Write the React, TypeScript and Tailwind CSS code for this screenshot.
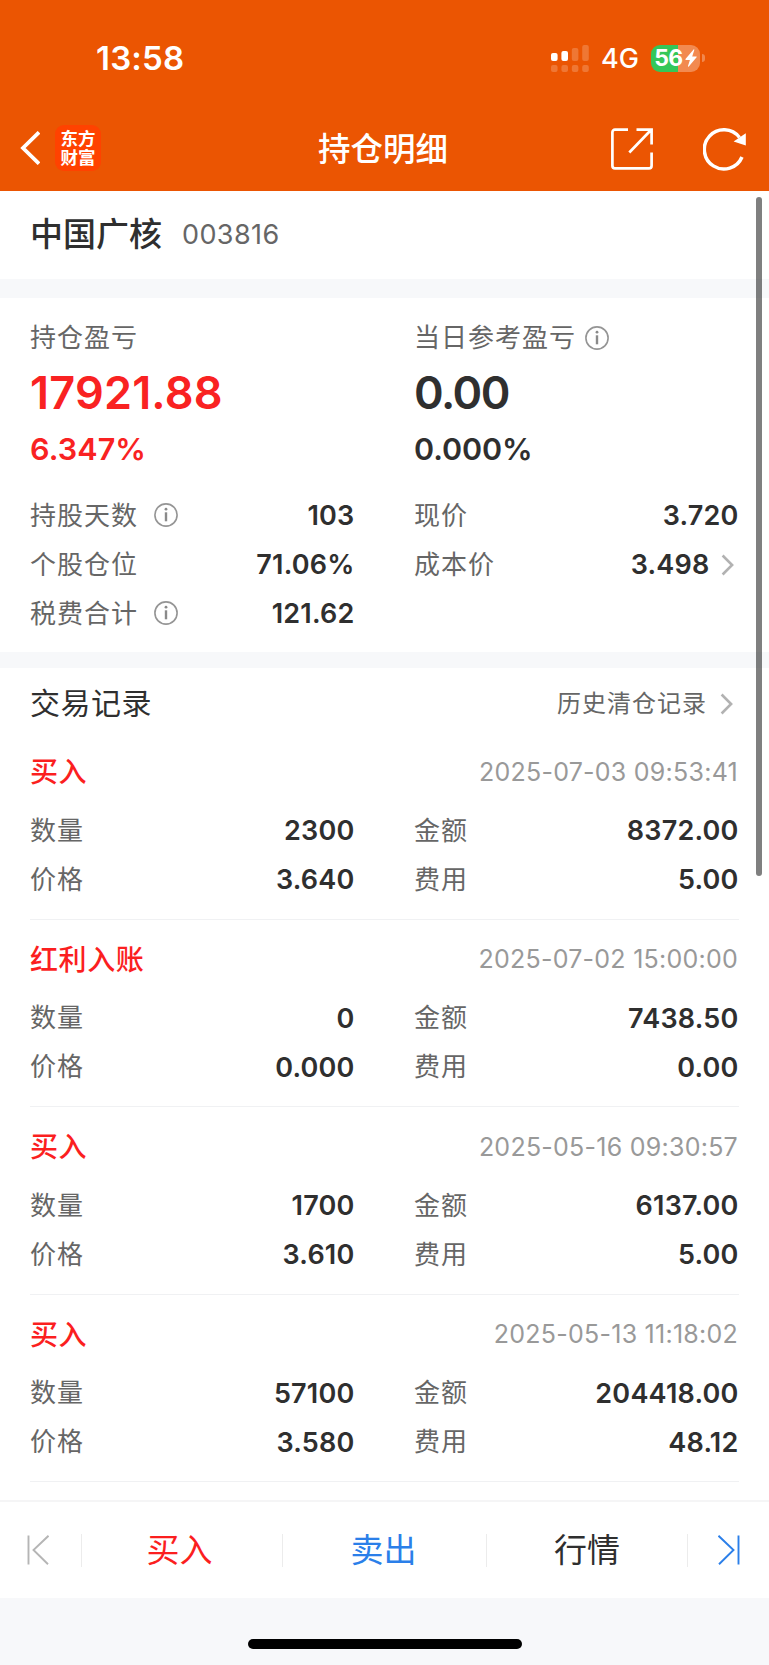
import type { ReactNode } from 'react';

interface Trade {
  type: string;
  time: string;
  count: string;
  amount: string;
  price: string;
  fee: string;
}

const trades: Trade[] = [
  { type: '买入', time: '2025-07-03 09:53:41', count: '2300', amount: '8372.00', price: '3.640', fee: '5.00' },
  { type: '红利入账', time: '2025-07-02 15:00:00', count: '0', amount: '7438.50', price: '0.000', fee: '0.00' },
  { type: '买入', time: '2025-05-16 09:30:57', count: '1700', amount: '6137.00', price: '3.610', fee: '5.00' },
  { type: '买入', time: '2025-05-13 11:18:02', count: '57100', amount: '204418.00', price: '3.580', fee: '48.12' },
];

const InfoIcon = () => (
  <svg viewBox="0 0 24 24" className="w-6 h-6 shrink-0" fill="none">
    <circle cx="12" cy="12" r="11.1" stroke="#959595" strokeWidth="1.6" />
    <circle cx="12" cy="6.2" r="1.4" fill="#8a8a8a" />
    <path d="M12 9.3v9" stroke="#8a8a8a" strokeWidth="2.4" />
  </svg>
);

const Chevron = () => (
  <svg viewBox="0 0 14 22" className="w-3.5 h-[22px] shrink-0" fill="none">
    <path d="M1.6 1.5 11.1 11 1.6 20.5" stroke="#b2b2b2" strokeWidth="2.6" />
  </svg>
);

// 一行「标签 … 数值」，arrow 时数值后带箭头
function Field({ label, value, info, arrow }: { label: string; value: string; info?: boolean; arrow?: boolean }) {
  return (
    <div className="flex h-[49px] items-center leading-none">
      <span className="text-[26px] tracking-[1px] text-[#666]">{label}</span>
      {info && (
        <span className="ml-4 pb-px">
          <InfoIcon />
        </span>
      )}
      <span className="ml-auto text-[27px] font-semibold tracking-[0.2px] text-[#2f2f2f]">{value}</span>
      {arrow && (
        <span className="ml-[11px] mr-1">
          <Chevron />
        </span>
      )}
    </div>
  );
}

function Columns({ children }: { children: ReactNode }) {
  return <div className="grid grid-cols-[324.5px_324.5px] gap-x-[59.5px]">{children}</div>;
}

function StatusBar() {
  return (
    <div className="flex h-[116px] items-center pl-[96px] pr-[64px] leading-none text-white">
      <span className="text-[33px] font-semibold tracking-[0.2px]">13:58</span>
      <svg viewBox="0 0 38 27" className="ml-auto h-[27px] w-[38px]" fill="#fff">
        <rect x="0" y="8" width="6.6" height="8" rx="2" />
        <rect x="10.4" y="6" width="6.6" height="10" rx="2" />
        <g fillOpacity="0.2">
          <rect x="20.8" y="3" width="6.6" height="13" rx="2" />
          <rect x="31.2" y="0" width="6.6" height="16" rx="2" />
          <rect x="0" y="20" width="6.6" height="7" rx="2" />
          <rect x="10.4" y="20" width="6.6" height="7" rx="2" />
          <rect x="20.8" y="20" width="6.6" height="7" rx="2" />
          <rect x="31.2" y="20" width="6.6" height="7" rx="2" />
        </g>
      </svg>
      <span className="ml-3 text-[27px] font-medium">4G</span>
      <div className="ml-3 flex h-[27px] w-[49px] items-center justify-center rounded-[9px] bg-linear-to-r from-[#34c759] from-56% to-[#f28a50] to-56%">
        <span className="text-[23px] font-bold tracking-[-0.5px]">56</span>
        <svg viewBox="0 0 12 18" className="ml-0.5 h-[18px] w-3" fill="#fff">
          <path d="M8.6.4.5 10.1c-.3.4-.1.8.4.8h4L3 17.1c-.2.6.4.9.8.4l7.8-9.3c.3-.4.1-.8-.4-.8h-4L9.3 1C9.5.3 9 0 8.6.4Z" />
        </svg>
      </div>
      <span className="ml-0.5 h-2 w-[3px] rounded-r-full bg-white/30" />
    </div>
  );
}

function NavBar() {
  return (
    <div className="flex h-[75px] items-center pb-[17px] pl-5 pr-[23px] text-white">
      <div className="flex flex-1 items-center pt-1.5">
        <svg viewBox="0 0 20 34" className="h-[34px] w-5" fill="none">
          <path d="M19 1.3 3 17l16 15.7" stroke="#fff" strokeWidth="3.8" />
        </svg>
        <div className="ml-[15px] flex h-[46px] w-[46px] flex-col items-center justify-center rounded-[9px] bg-[#ff4200] text-[17.5px] leading-[19px] font-bold">
          <span>东方</span>
          <span>财富</span>
        </div>
      </div>
      <h1 className="pt-2.5 text-[32.5px] leading-none font-medium">持仓明细</h1>
      <div className="flex flex-1 items-center justify-end pt-2">
        <svg viewBox="0 0 42 42" className="h-[42px] w-[42px]" fill="none" stroke="#fff" strokeWidth="2.7">
          <path d="M17 1.6H4A2.6 2.6 0 0 0 1.4 4.2v33.6A2.6 2.6 0 0 0 4 40.4h34a2.6 2.6 0 0 0 2.6-2.6V24.5" />
          <path d="M25.5 1.6h15.1v15M40 2 18.3 24.5" />
        </svg>
        <svg viewBox="0 0 43 43" className="ml-[50px] h-[43px] w-[43px]" fill="none">
          <path d="M39 29A19.6 19.6 0 1 1 36.5 9.5" stroke="#fff" strokeWidth="3.5" />
          <path d="M42.8 5.2v12.4L30.6 13.4Z" fill="#fff" />
        </svg>
      </div>
    </div>
  );
}

function TradeRecord({ trade }: { trade: Trade }) {
  return (
    <div className="h-[187.6px] border-b border-[#f0f1f3] pt-4">
      <div className="flex h-[48px] items-center justify-between pr-px leading-none">
        <span className="text-[28px] font-medium tracking-[0.6px] text-[#fb1f1f]">{trade.type}</span>
        <span className="text-[25px] tracking-[0.25px] text-[#999]">{trade.time}</span>
      </div>
      <div className="mt-[10px]">
        <Columns>
          <Field label="数量" value={trade.count} />
          <Field label="金额" value={trade.amount} />
          <Field label="价格" value={trade.price} />
          <Field label="费用" value={trade.fee} />
        </Columns>
      </div>
    </div>
  );
}

const Divider = () => <span className="h-[33px] w-px shrink-0 bg-[#ececec]" />;

export default function App() {
  return (
    <div className="relative flex h-[1665px] w-[769px] flex-col overflow-hidden bg-white font-['Inter','Noto_Sans_CJK_SC',sans-serif]">
      <header className="h-[191px] shrink-0 bg-[#eb5502]">
        <StatusBar />
        <NavBar />
      </header>

      <div className="flex h-[87px] shrink-0 items-center pl-[30px] leading-none">
        <span className="text-[33px] font-medium text-[#2f2f2f]">中国广核</span>
        <span className="ml-5 text-[27px] tracking-[0.4px] text-[#666]">003816</span>
      </div>

      <section className="mt-px h-[373px] shrink-0 border-t-[19px] border-[#f7f8fa] px-[30px] pt-[22px]">
        <Columns>
          <div className="leading-none">
            <div className="flex h-9 items-center text-[26px] tracking-[1px] text-[#666]">持仓盈亏</div>
            <div className="flex h-[72px] items-center text-[45px] font-semibold tracking-[0.2px] text-[#f92222]">17921.88</div>
            <div className="flex h-[42px] items-center text-[30.5px] font-semibold tracking-[0.1px] text-[#f92222]">6.347%</div>
          </div>
          <div className="leading-none">
            <div className="flex h-9 items-center text-[26px] tracking-[1px] text-[#666]">
              <span className="mr-[9px]">当日参考盈亏</span>
              <InfoIcon />
            </div>
            <div className="flex h-[72px] items-center text-[45px] font-semibold tracking-[-1.5px] text-[#2f2f2f]">0.00</div>
            <div className="flex h-[42px] items-center text-[30.5px] font-semibold tracking-[-0.1px] text-[#2f2f2f]">0.000%</div>
          </div>
        </Columns>
        <div className="mt-[21px]">
          <Columns>
            <Field label="持股天数" value="103" info />
            <Field label="现价" value="3.720" />
            <Field label="个股仓位" value="71.06%" />
            <Field label="成本价" value="3.498" arrow />
            <Field label="税费合计" value="121.62" info />
          </Columns>
        </div>
      </section>

      <section className="h-[848px] shrink-0 overflow-hidden border-t-[16px] border-[#f7f8fa] px-[30px]">
        <div className="flex h-[64px] items-center pt-[7px] leading-none">
          <h2 className="pb-0.5 text-[30px] tracking-[0.5px] text-[#2f2f2f]">交易记录</h2>
          <span className="ml-auto mr-[13px] text-[24px] tracking-[1px] text-[#666]">历史清仓记录</span>
          <span className="mr-[5px]">
            <Chevron />
          </span>
        </div>
        {trades.map((t) => (
          <TradeRecord key={t.time} trade={t} />
        ))}
      </section>

      <nav className="flex h-[98px] shrink-0 items-center border-t-2 border-[#f5f5f6] text-[33px] leading-none">
        <div className="flex w-[81px] pl-[27px]">
          <svg viewBox="0 0 22 30" className="h-[30px] w-[22px]" fill="none" stroke="#b5b5b5" strokeWidth="1.9">
            <path d="M1.5 .5v29M21.5 .8 6.5 15l14.5 14.2" />
          </svg>
        </div>
        <Divider />
        <span className="w-[200px] pr-[5px] text-center text-[#fb1f1f]">买入</span>
        <Divider />
        <span className="w-[203px] pr-0.5 text-center text-[#2b7fe9]">卖出</span>
        <Divider />
        <span className="w-[200px] text-center text-[#2f2f2f]">行情</span>
        <Divider />
        <div className="flex flex-1 justify-end pr-[29px]">
          <svg viewBox="0 0 22 30" className="h-[30px] w-[22px]" fill="none" stroke="#2b7fe9" strokeWidth="1.9">
            <path d="M20.5 .5v29M.5 .8 15.5 15 1 29.2" />
          </svg>
        </div>
      </nav>

      <footer className="flex flex-1 justify-center bg-[#f7f8fa] pt-[41px]">
        <span className="h-[10px] w-[274px] rounded-full bg-black" />
      </footer>

      {/* 滚动条 */}
      <div className="absolute top-[197px] right-[7px] h-[679px] w-[6px] rounded-full bg-black/50" />
    </div>
  );
}
